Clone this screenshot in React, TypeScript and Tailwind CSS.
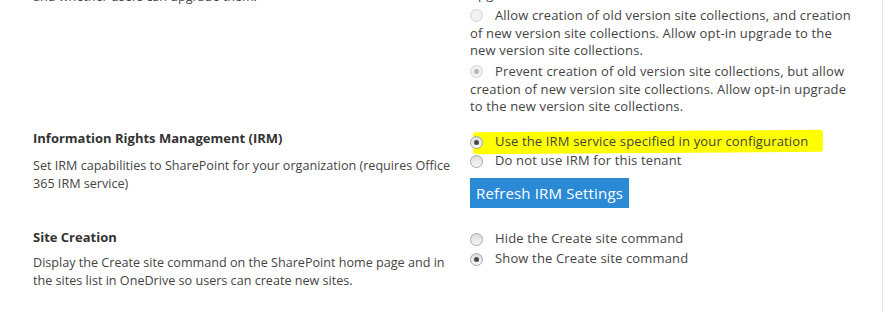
import React from 'react';

const font = { fontFamily: '"Open Sans", "Noto Sans", sans-serif' };

const Radio: React.FC<{ checked?: boolean; disabled?: boolean }> = ({ checked, disabled }) => (
  <span
    className={`inline-flex items-center justify-center shrink-0 w-[13px] h-[13px] rounded-full border ${
      disabled ? 'border-[#d4d4d4] bg-[#f1f1f1]' : 'border-[#a8a8a8] bg-gradient-to-b from-[#dcdcdc] to-[#f7f7f7]'
    }`}
  >
    {checked && (
      <span className={`w-[5px] h-[5px] rounded-full ${disabled ? 'bg-[#b9b9b9]' : 'bg-[#4a4a4a]'}`} />
    )}
  </span>
);

const Option: React.FC<{ checked?: boolean; disabled?: boolean; children: React.ReactNode }> = ({
  checked,
  disabled,
  children,
}) => (
  <div className="flex items-center gap-[12px] h-[19px]">
    <Radio checked={checked} disabled={disabled} />
    <span className="whitespace-nowrap">{children}</span>
  </div>
);

const App: React.FC = () => {
  return (
    <div
      className="w-[883px] h-[312px] overflow-hidden bg-white border-r border-[#e6e6e6] text-[#444]"
      style={font}
    >
      {/* top section, cut off by the window */}
      <div className="grid grid-cols-[470px_1fr] -mt-[12px]">
        <div className="pl-[33px] text-[12.6px] leading-[18px]">and whether users can upgrade them.</div>
        <div className="text-[13px] leading-[17.5px] tracking-[0.15px]">
          <div className="h-[18px] -mt-[2px]">upgrade</div>
          <div className="flex items-center gap-[12px] h-[17.5px] mt-[3px]">
            <Radio disabled />
            <span className="whitespace-nowrap">Allow creation of old version site collections, and creation</span>
          </div>
          <div className="whitespace-nowrap">of new version site collections. Allow opt-in upgrade to the</div>
          <div className="whitespace-nowrap">new version site collections.</div>
          <div className="flex items-center gap-[12px] h-[17.5px] mt-[3.5px]">
            <Radio checked disabled />
            <span className="whitespace-nowrap">Prevent creation of old version site collections, but allow</span>
          </div>
          <div className="whitespace-nowrap">creation of new version site collections. Allow opt-in upgrade</div>
          <div className="whitespace-nowrap">to the new version site collections.</div>
        </div>
      </div>

      {/* Information Rights Management */}
      <div className="grid grid-cols-[470px_1fr] mt-[13px]">
        <div className="pl-[33px]">
          <div className="text-[13px] font-bold text-[#333] leading-[18px]">Information Rights Management (IRM)</div>
          <div className="mt-[10px] text-[12.6px] leading-[18px] whitespace-nowrap">
            Set IRM capabilities to SharePoint for your organization (requires Office
            <br />
            365 IRM service)
          </div>
        </div>
        <div className="text-[13px] tracking-[0.15px] pt-[4px]">
          <div className="relative">
            <span className="absolute left-[3px] top-[-2px] w-[350px] h-[22px] bg-[#ffff00] rounded-[3px] -rotate-[0.4deg]" />
            <div className="relative">
              <Option checked>Use the IRM service specified in your configuration</Option>
            </div>
          </div>
          <Option>Do not use IRM for this tenant</Option>
          <button className="mt-[7px] h-[30px] px-[6px] bg-[#2b8ad6] text-white text-[15px] leading-[30px]">
            Refresh IRM Settings
          </button>
        </div>
      </div>

      {/* Site Creation */}
      <div className="grid grid-cols-[470px_1fr] mt-[20px]">
        <div className="pl-[33px]">
          <div className="text-[13px] font-bold text-[#333] leading-[18px]">Site Creation</div>
          <div className="mt-[8px] text-[12.6px] leading-[18px] whitespace-nowrap">
            Display the Create site command on the SharePoint home page and in
            <br />
            the sites list in OneDrive so users can create new sites.
          </div>
        </div>
        <div className="text-[13px] tracking-[0.15px] pt-[2px] flex flex-col gap-[1px]">
          <Option>Hide the Create site command</Option>
          <Option checked>Show the Create site command</Option>
        </div>
      </div>
    </div>
  );
};

export default App;
